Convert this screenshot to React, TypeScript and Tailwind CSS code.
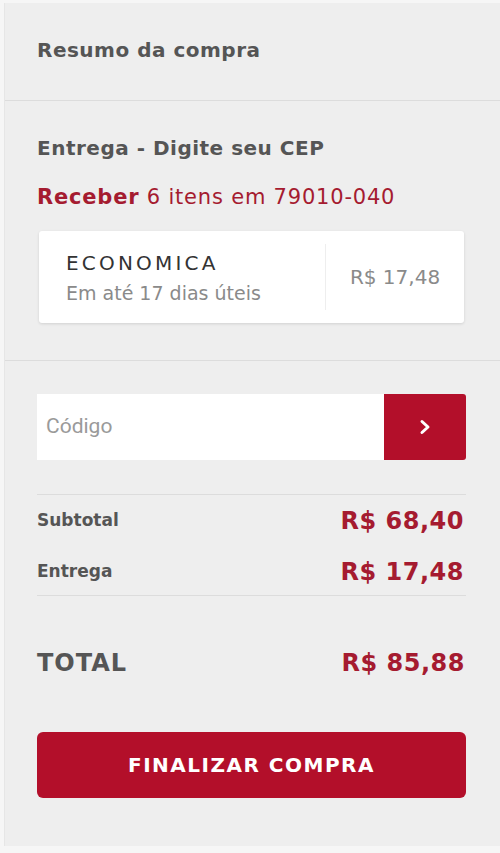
import React from "react";

export default function App() {
  return (
    <div className="w-[500px] h-[853px] bg-[#f6f6f6] pl-[4px] pt-[3px] font-['DejaVu_Sans',sans-serif]">
      <div className="h-[843px] bg-[#eeeeee] border-l border-[#e6e6e6]">
        <div className="h-[98px] flex items-center pl-[32px] pb-[4px] border-b border-[#dcdcdc]">
          <span className="text-[20px] font-bold text-[#555555] leading-[24px] tracking-[0.5px]">Resumo da compra</span>
        </div>
        <div className="pl-[32px] pr-[34px] pt-[35px] pb-[37px] border-b border-[#dcdcdc]">
          <div className="text-[20px] font-bold text-[#555555] leading-[24px] tracking-[0.5px]">Entrega - Digite seu CEP</div>
          <div className="mt-[25px] text-[21px] text-[#a51b30] leading-[24px] tracking-[0.8px]">
            <span className="font-bold">Receber</span> 6 itens em 79010-040
          </div>
          <div className="mt-[22px] ml-[2px] mr-[2px] h-[92px] bg-white rounded-[3px] shadow-[0_1px_3px_rgba(0,0,0,0.12)] flex items-center">
            <div className="flex-1 pl-[27px]">
              <div className="text-[20px] text-[#333333] leading-[24px] tracking-[3.2px]">ECONOMICA</div>
              <div className="mt-[7px] text-[19px] text-[#8a8a8a] leading-[22px]">Em até 17 dias úteis</div>
            </div>
            <div className="w-px h-[66px] bg-[#eeeeee]" />
            <div className="w-[138px] text-center text-[20px] text-[#8a8a8a]">R$ 17,48</div>
          </div>
        </div>
        <div className="pl-[32px] pr-[34px] pt-[33px]">
          <div className="flex h-[66px]">
            <div className="flex-1 bg-white flex items-center pl-[9px] text-[21px] text-[#9a9a9a] font-['Roboto',sans-serif]">Código</div>
            <button className="w-[82px] bg-[#b30f2a] rounded-tr-[3px] rounded-br-[3px] flex items-center justify-center">
              <svg width="14" height="16" viewBox="0 0 14 16" fill="none">
                <path d="M4 2.5 L10 8 L4 13.5" stroke="white" strokeWidth="3" strokeLinecap="round" strokeLinejoin="round" />
              </svg>
            </button>
          </div>
          <div className="mt-[34px] border-t border-[#dcdcdc]" />
          <div className="flex items-center justify-between h-[50px] pt-[2px]">
            <span className="text-[17px] font-bold text-[#555555]">Subtotal</span>
            <span className="text-[24px] font-bold text-[#a51b30] pr-[2px] tracking-[0.5px]">R$ 68,40</span>
          </div>
          <div className="flex items-center justify-between h-[50px] pt-[3px]">
            <span className="text-[17px] font-bold text-[#555555]">Entrega</span>
            <span className="text-[24px] font-bold text-[#a51b30] pr-[2px] tracking-[0.5px]">R$ 17,48</span>
          </div>
          <div className="border-t border-[#dcdcdc]" />
          <div className="flex items-center justify-between mt-[49px] h-[36px]">
            <span className="text-[24px] font-bold text-[#555555] tracking-[1px]">TOTAL</span>
            <span className="text-[24px] font-bold text-[#a51b30] pr-[1px] tracking-[0.5px]">R$ 85,88</span>
          </div>
          <button className="mt-[51px] w-full h-[66px] bg-[#b30f2a] rounded-[6px] text-white text-[20px] font-bold tracking-[1.5px]">
            FINALIZAR COMPRA
          </button>
        </div>
      </div>
    </div>
  );
}
